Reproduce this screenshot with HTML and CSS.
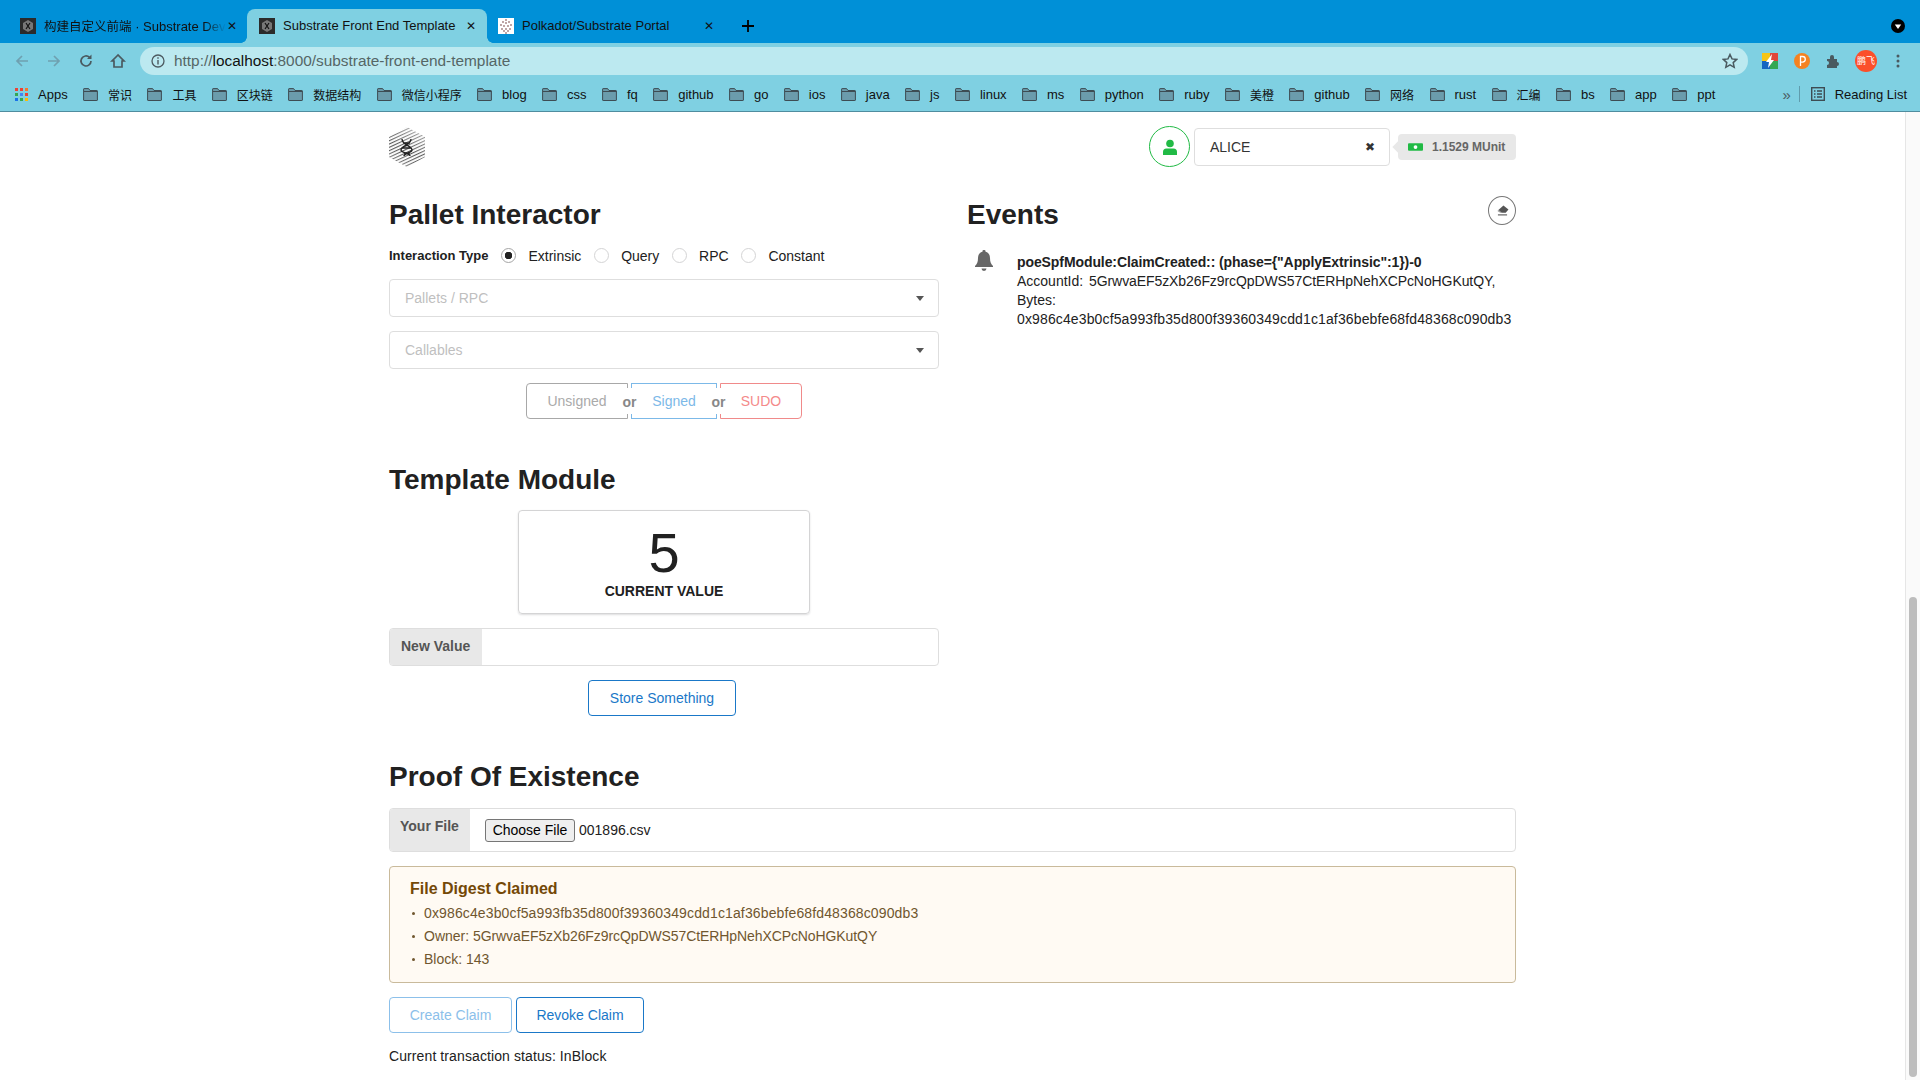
FILE: index.html
```html
<!DOCTYPE html>
<html lang="en">
	<head>
		<meta charset="UTF-8">
		<title>Substrate Front End Template</title>
		<link rel="stylesheet" href="styles.css">
	</head>
	<body>
		<svg class="defs" width="0" height="0">
			<defs>
				<symbol id="folder" viewBox="0 0 15 13">
					<path d="M.6 2V12a.5.5 0 0 0 .5.5H13.900a.5.5 0 0 0 .5-.5V3a.5.5 0 0 0-.5-.5H7L5.600.6H1.100a.5.5 0 0 0-.5.5z" fill="#6b9cac" stroke="#3d4c53" stroke-width="1"/>
					<path d="M1 3.500H14" stroke="#3d4c53" stroke-width="1"/>
				</symbol>
				<pattern id="hatch" width="3" height="3" patternUnits="userSpaceOnUse" patternTransform="rotate(-25)">
					<rect width="3" height="1.100" fill="#4a4a4a"/>
				</pattern>
				<linearGradient id="hexfade" x1="0.7" y1="0" x2="0.3" y2="1">
					<stop offset="0" stop-color="#fff" stop-opacity=".55"/>
					<stop offset=".6" stop-color="#fff" stop-opacity=".05"/>
					<stop offset="1" stop-color="#fff" stop-opacity=".35"/>
				</linearGradient>
				<symbol id="hexlogo" viewBox="0 0 36 40">
					<path d="M18 0L36 10V30L18 40L0 30V10z" fill="url(#hatch)"/>
					<path d="M18 0L36 10V30L18 40L0 30V10z" fill="url(#hexfade)"/>
					<path d="M13 12C13 18 23 19 23 23C23 26 15 26 15 29M22 12C22 18 12 19 12 23C12 26 21 26 21 29M14 16H21M13 21H22M15 26H21" fill="none" stroke="#222" stroke-width="1.400"/>
				</symbol>
			</defs>
		</svg>

		<header class="browser">
			<div class="tabstrip">
				<div class="tab tab-first">
					<svg class="favicon" viewBox="0 0 16 16"><rect width="16" height="16" fill="#2b2b2b"/><path d="M8 2l5 3v6l-5 3-5-3V5z" fill="#777"/><path d="M6 5l4 6M10 5l-4 6" stroke="#111" stroke-width="1.200"/></svg>
					<span class="tab-title fade"><span class="tab-cjk">构建自定义前端</span> · Substrate Dev</span>
					<span class="tab-close">✕</span>
				</div>
				<div class="tab active">
					<svg class="favicon" viewBox="0 0 16 16"><rect width="16" height="16" fill="#2b2b2b"/><path d="M8 2l5 3v6l-5 3-5-3V5z" fill="#777"/><path d="M6 5l4 6M10 5l-4 6" stroke="#111" stroke-width="1.200"/></svg>
					<span class="tab-title">Substrate Front End Template</span>
					<span class="tab-close">✕</span>
				</div>
				<div class="tab tab-last">
					<svg class="favicon" viewBox="0 0 16 16"><rect width="16" height="16" fill="#fff"/><g fill="#a88"><circle cx="8" cy="2" r="1"/><circle cx="5" cy="4" r="1"/><circle cx="11" cy="4" r="1"/><circle cx="8" cy="5" r="1"/><circle cx="3" cy="7" r="1"/><circle cx="6" cy="8" r="1"/><circle cx="10" cy="8" r="1"/><circle cx="13" cy="7" r="1"/><circle cx="4" cy="11" r="1"/><circle cx="8" cy="11" r="1"/><circle cx="12" cy="11" r="1"/><circle cx="6" cy="13" r="1"/><circle cx="10" cy="13" r="1"/><circle cx="8" cy="15" r="1"/></g></svg>
					<span class="tab-title">Polkadot/Substrate Portal</span>
					<span class="tab-close">✕</span>
				</div>
				<svg class="new-tab" viewBox="0 0 14 14"><path d="M7 1V13M1 7H13" stroke="#000" stroke-width="1.800"/></svg>
				<svg class="tab-search" viewBox="0 0 14 14"><circle cx="7" cy="7" r="7" fill="#000"/><path d="M3.800 5.500H10.200L7 10z" fill="#fff"/></svg>
			</div>
			<div class="toolbar">
				<svg class="nav-btn" viewBox="0 0 16 16"><path d="M14 8H3M8 3L3 8l5 5" fill="none" stroke="#6fa0b0" stroke-width="1.700"/></svg>
				<svg class="nav-btn" viewBox="0 0 16 16"><path d="M2 8H13M8 3l5 5-5 5" fill="none" stroke="#6fa0b0" stroke-width="1.700"/></svg>
				<svg class="nav-btn" viewBox="0 0 16 16"><path d="M13 8A5 5 0 1 1 11.500 4.400" fill="none" stroke="#4a5a60" stroke-width="1.700"/><path d="M13.500 1.500V6H9z" fill="#4a5a60"/></svg>
				<svg class="nav-btn" viewBox="0 0 16 16"><path d="M8 2L2 8H4V14H12V8H14z" fill="none" stroke="#4a5a60" stroke-width="1.700"/></svg>
				<div class="omnibox">
					<svg class="info" viewBox="0 0 14 14"><circle cx="7" cy="7" r="6" fill="none" stroke="#4d5a60" stroke-width="1.300"/><path d="M7 6V10.500M7 3.300V4.800" stroke="#4d5a60" stroke-width="1.400"/></svg>
					<span class="url">http://<b>localhost</b>:8000/substrate-front-end-template</span>
					<svg class="star" viewBox="0 0 16 16"><path d="M8 1.500l2 4.400 4.700.5-3.500 3.200 1 4.700L8 11.900l-4.200 2.400 1-4.700L1.300 6.400 6 5.900z" fill="none" stroke="#4a5a60" stroke-width="1.500"/></svg>
				</div>
				<div class="extensions">
					<svg class="ext" viewBox="0 0 16 16"><rect width="8" height="8" fill="#f5c518"/><rect x="8" width="8" height="8" fill="#e0443a"/><rect y="8" width="8" height="8" fill="#1565c0"/><rect x="8" y="8" width="8" height="8" fill="#34a853"/><path d="M10 1L4 9h3l-1 6 6-8H9z" fill="#fff"/></svg>
					<svg class="ext" viewBox="0 0 16 16"><circle cx="8" cy="8" r="8" fill="#f58220"/><path d="M6.500 13V3.500h2a2.800 2.800 0 0 1 0 5.600h-2" fill="none" stroke="#fff" stroke-width="1.300"/></svg>
					<svg class="ext" viewBox="0 0 16 16"><path d="M1 6h3V4a2 2 0 0 1 4 0v2h3v3a2 2 0 0 1 0 4v2H1v-3a2 2 0 0 0 0-4z" fill="#4a5a60"/></svg>
					<span class="avatar">鹏飞</span>
					<svg class="ext" viewBox="0 0 16 16"><g fill="#4a5a60"><circle cx="8" cy="3" r="1.500"/><circle cx="8" cy="8" r="1.500"/><circle cx="8" cy="13" r="1.500"/></g></svg>
				</div>
			</div>
			<div class="bookmarks">
				<div class="bm apps">
					<svg class="apps-grid" viewBox="0 0 13 13"><g><rect width="3" height="3" fill="#ea4335"/><rect x="5" width="3" height="3" fill="#ea4335"/><rect x="10" width="3" height="3" fill="#f4772e"/><rect y="5" width="3" height="3" fill="#34a853"/><rect x="5" y="5" width="3" height="3" fill="#4285f4"/><rect x="10" y="5" width="3" height="3" fill="#ea4335"/><rect y="10" width="3" height="3" fill="#1a73e8"/><rect x="5" y="10" width="3" height="3" fill="#34a853"/><rect x="10" y="10" width="3" height="3" fill="#fbbc05"/></g></svg>
					<span>Apps</span>
				</div>
				<div class="bm"><svg class="folder"><use href="#folder"/></svg><span class="cjk">常识</span></div>
				<div class="bm"><svg class="folder"><use href="#folder"/></svg><span class="cjk">工具</span></div>
				<div class="bm"><svg class="folder"><use href="#folder"/></svg><span class="cjk">区块链</span></div>
				<div class="bm"><svg class="folder"><use href="#folder"/></svg><span class="cjk">数据结构</span></div>
				<div class="bm"><svg class="folder"><use href="#folder"/></svg><span class="cjk">微信小程序</span></div>
				<div class="bm"><svg class="folder"><use href="#folder"/></svg><span>blog</span></div>
				<div class="bm"><svg class="folder"><use href="#folder"/></svg><span>css</span></div>
				<div class="bm"><svg class="folder"><use href="#folder"/></svg><span>fq</span></div>
				<div class="bm"><svg class="folder"><use href="#folder"/></svg><span>github</span></div>
				<div class="bm"><svg class="folder"><use href="#folder"/></svg><span>go</span></div>
				<div class="bm"><svg class="folder"><use href="#folder"/></svg><span>ios</span></div>
				<div class="bm"><svg class="folder"><use href="#folder"/></svg><span>java</span></div>
				<div class="bm"><svg class="folder"><use href="#folder"/></svg><span>js</span></div>
				<div class="bm"><svg class="folder"><use href="#folder"/></svg><span>linux</span></div>
				<div class="bm"><svg class="folder"><use href="#folder"/></svg><span>ms</span></div>
				<div class="bm"><svg class="folder"><use href="#folder"/></svg><span>python</span></div>
				<div class="bm"><svg class="folder"><use href="#folder"/></svg><span>ruby</span></div>
				<div class="bm"><svg class="folder"><use href="#folder"/></svg><span class="cjk">美橙</span></div>
				<div class="bm"><svg class="folder"><use href="#folder"/></svg><span>github</span></div>
				<div class="bm"><svg class="folder"><use href="#folder"/></svg><span class="cjk">网络</span></div>
				<div class="bm"><svg class="folder"><use href="#folder"/></svg><span>rust</span></div>
				<div class="bm"><svg class="folder"><use href="#folder"/></svg><span class="cjk">汇编</span></div>
				<div class="bm"><svg class="folder"><use href="#folder"/></svg><span>bs</span></div>
				<div class="bm"><svg class="folder"><use href="#folder"/></svg><span>app</span></div>
				<div class="bm"><svg class="folder"><use href="#folder"/></svg><span>ppt</span></div>
				<div class="bm-end">
					<span class="more">»</span>
					<span class="bm-sep"></span>
					<svg class="reading" viewBox="0 0 14 14"><rect x=".7" y=".7" width="12.600" height="12.600" fill="none" stroke="#3d4c53" stroke-width="1.400"/><path d="M3 4H4.500M6 4H11M3 7H4.500M6 7H11M3 10H4.500M6 10H11" stroke="#3d4c53" stroke-width="1.300"/></svg>
					<span>Reading List</span>
				</div>
			</div>
		</header>

		<div class="viewport">
			<main class="page">
				<div class="topbar">
					<svg class="logo"><use href="#hexlogo"/></svg>
					<div class="account">
						<span class="user-btn">
							<svg viewBox="0 0 16 16" width="16" height="16"><circle cx="8" cy="4.500" r="3.800" fill="#21ba45"/><path d="M1 16V13a3.500 3.500 0 0 1 3.500-3.500h7A3.500 3.500 0 0 1 15 13v3z" fill="#21ba45"/></svg>
						</span>
						<div class="account-select">
							<span>ALICE</span>
							<span class="clear">✖</span>
						</div>
						<div class="balance">
							<svg viewBox="0 0 16 8" width="15" height="8"><rect width="16" height="8" rx="1" fill="#21ba45"/><circle cx="8" cy="4" r="2" fill="#fff"/></svg>
							<span>1.1529 MUnit</span>
						</div>
					</div>
				</div>

				<div class="cols">
					<div class="col">
						<h1>Pallet Interactor</h1>
						<div class="interaction">
							<label class="interaction-label">Interaction Type</label>
							<span class="radio checked"></span><span class="radio-text">Extrinsic</span>
							<span class="radio"></span><span class="radio-text">Query</span>
							<span class="radio"></span><span class="radio-text">RPC</span>
							<span class="radio"></span><span class="radio-text">Constant</span>
						</div>
						<div class="select">Pallets / RPC</div>
						<div class="select">Callables</div>
						<div class="tx-buttons">
							<span class="btn tx-unsigned">Unsigned</span>
							<span class="or"><b>or</b></span>
							<span class="btn tx-signed">Signed</span>
							<span class="or"><b>or</b></span>
							<span class="btn tx-sudo">SUDO</span>
						</div>

						<h1 class="mid-title">Template Module</h1>
						<div class="value-card">
							<div class="value-num">5</div>
							<div class="value-label">CURRENT VALUE</div>
						</div>
						<div class="labeled-input">
							<span class="input-label">New Value</span>
							<span class="input-body"></span>
						</div>
						<div class="store-row">
							<span class="btn primary store">Store Something</span>
						</div>
					</div>

					<div class="col">
						<div class="events-head">
							<h1>Events</h1>
							<span class="erase">
								<svg viewBox="0 0 14 12" width="13" height="11"><path d="M8 0.500L13.500 5 10.500 8.500H6L2.500 5.500z" fill="#555"/><path d="M2.500 5.500L6 8.500H4.500L1.500 6.500z" fill="#999"/><path d="M2 10.800H12" stroke="#555" stroke-width="1.200"/></svg>
							</span>
						</div>
						<div class="event">
							<svg class="bell" viewBox="0 0 18 21"><path d="M9 0a1.500 1.500 0 0 1 1.500 1.800C13.500 2.500 15 5 15 8c0 4 1 6 3 8v1H0v-1c2-2 3-4 3-8 0-3 1.500-5.500 4.500-6.200A1.500 1.500 0 0 1 9 0zM6.500 18.500h5a2.500 2.500 0 0 1-5 0z" fill="#666"/></svg>
							<div class="event-text">
								<div class="event-name">poeSpfModule:ClaimCreated:: (phase={"ApplyExtrinsic":1})-0</div>
								<div>AccountId: <span class="addr event-addr">5GrwvaEF5zXb26Fz9rcQpDWS57CtERHpNehXCPcNoHGKutQY,</span></div>
								<div>Bytes:</div>
								<div class="hex">0x986c4e3b0cf5a993fb35d800f39360349cdd1c1af36bebfe68fd48368c090db3</div>
							</div>
						</div>
					</div>
				</div>

				<h1 class="mid-title">Proof Of Existence</h1>
				<div class="labeled-input file-input">
					<span class="input-label">Your File</span>
					<span class="input-body">
						<span class="choose">Choose File</span>
						<span>001896.csv</span>
					</span>
				</div>
				<div class="message">
					<div class="message-head">File Digest Claimed</div>
					<ul>
						<li class="hex">0x986c4e3b0cf5a993fb35d800f39360349cdd1c1af36bebfe68fd48368c090db3</li>
						<li>Owner: <span class="addr">5GrwvaEF5zXb26Fz9rcQpDWS57CtERHpNehXCPcNoHGKutQY</span></li>
						<li>Block: 143</li>
					</ul>
				</div>
				<div class="claim-row">
					<span class="btn primary disabled create">Create Claim</span>
					<span class="btn primary revoke">Revoke Claim</span>
				</div>
				<div class="status">Current transaction status: InBlock</div>
			</main>
			<div class="scrollbar"><div class="thumb"></div></div>
		</div>
	</body>
</html>
```
FILE: styles.css
```css
* {
	margin: 0;
	padding: 0;
	box-sizing: border-box;
}

html, body {
	height: 1080px;
	overflow: hidden;
}

body {
	font-family: "Liberation Sans", "Noto Sans CJK SC", sans-serif;
	font-size: 14px;
	color: #212121;
	background-color: #fff;
	display: flex;
	flex-direction: column;
}

.defs {
	position: absolute;
}

/* browser chrome */
.browser {
	height: 112px;
	flex: none;
	background-color: #7fd0e2;
	border-bottom: 1px solid #4f8d9f;
	color: #111;
}

.tabstrip {
	height: 43px;
	background-color: #0090d7;
	display: flex;
	align-items: flex-end;
}

.tab {
	height: 34px;
	display: flex;
	align-items: center;
	font-size: 13px;
	flex: none;
}

.tab-first {
	width: 247px;
	padding: 0 9px 0 20px;
}

.tab.active {
	width: 240px;
	padding: 0 10px 0 12px;
	background-color: #7fd0e2;
	border-radius: 8px 8px 0 0;
	position: relative;
}

.tab.active::before,
.tab.active::after {
	content: "";
	position: absolute;
	bottom: 0;
	width: 6px;
	height: 6px;
}

.tab.active::before {
	left: -6px;
	background: radial-gradient(circle at 0 0, #0090d7 5.500px, #7fd0e2 6px);
}

.tab.active::after {
	right: -6px;
	background: radial-gradient(circle at 100% 0, #0090d7 5.500px, #7fd0e2 6px);
}

.tab-last {
	width: 233px;
	padding: 0 5px 0 11px;
}

.favicon {
	width: 16px;
	height: 16px;
	margin-right: 8px;
	flex: none;
}

.tab-title {
	flex: 1;
	white-space: nowrap;
	overflow: hidden;
	padding-bottom: 2px;
}

.tab-cjk {
	font-size: 12.500px;
}

.fade {
	mask-image: linear-gradient(to right, #000 88%, transparent 100%);
}

.tab-close {
	font-size: 12px;
	width: 12px;
	text-align: center;
	flex: none;
}

.new-tab {
	width: 14px;
	height: 14px;
	margin: 0 0 10px 21px;
}

.tab-search {
	width: 14px;
	height: 14px;
	margin: 0 15px 10px auto;
}

.toolbar {
	height: 36px;
	display: flex;
	align-items: center;
	padding: 4px 14px;
}

.nav-btn {
	width: 16px;
	height: 16px;
	margin-right: 16px;
	flex: none;
}

.omnibox {
	width: 1608px;
	height: 28px;
	margin-left: -2px;
	flex: none;
	background-color: #bce9f0;
	border-radius: 14px;
	display: flex;
	align-items: center;
	padding: 0 11px;
	color: #566;
}

.info {
	width: 14px;
	height: 14px;
	margin-right: 9px;
}

.url {
	font-size: 15.400px;
}

.url b {
	font-weight: normal;
	color: #111;
}

.star {
	width: 16px;
	height: 16px;
	margin-left: auto;
	margin-right: -1px;
}

.extensions {
	display: flex;
	align-items: center;
	margin-left: 14px;
}

.ext {
	width: 16px;
	height: 16px;
	margin-right: 16px;
	flex: none;
}

.ext:last-child {
	margin-right: 0;
}

.avatar {
	width: 22px;
	height: 22px;
	margin: 0 13px 0 -3px;
	border-radius: 50%;
	background-color: #fb4f2a;
	color: #fff;
	font-size: 9px;
	line-height: 22px;
	text-align: center;
	white-space: nowrap;
	flex: none;
}

.bookmarks {
	height: 32px;
	display: flex;
	align-items: center;
	gap: 15.400px;
	padding: 0 0 2px 15px;
	font-size: 13px;
	white-space: nowrap;
}

.bm {
	display: flex;
	align-items: center;
}

.apps-grid {
	width: 13px;
	height: 13px;
	margin-right: 10px;
}

.folder {
	width: 15px;
	height: 13px;
	margin-right: 10px;
}

.cjk {
	font-size: 12px;
}

.bm-end {
	margin-left: auto;
	display: flex;
	align-items: center;
	padding-right: 13px;
}

.more {
	color: #4a5a60;
	font-size: 15px;
}

.bm-sep {
	width: 1px;
	height: 16px;
	margin: 0 11px 0 8px;
	background-color: #5f9cad;
}

.reading {
	width: 14px;
	height: 14px;
	margin-right: 10px;
}

/* page */
.viewport {
	flex: 1;
	display: flex;
	min-height: 0;
}

.page {
	flex: 1;
	padding: 14px 389px 0;
	min-width: 0;
}

.scrollbar {
	width: 15px;
	flex: none;
	background-color: #fafafa;
	border-left: 1px solid #e6e6e6;
	padding: 485px 3px 0 3px;
}

.thumb {
	height: 480px;
	background-color: #bdbdbd;
	border-radius: 4px;
}

.topbar {
	height: 41px;
	display: flex;
	align-items: center;
	justify-content: space-between;
}

.logo {
	width: 36px;
	height: 40px;
}

.account {
	display: flex;
	align-items: center;
}

.user-btn {
	width: 41px;
	height: 41px;
	border: 1px solid #21ba45;
	border-radius: 50%;
	display: flex;
	align-items: center;
	justify-content: center;
}

.account-select {
	width: 196px;
	height: 38px;
	margin-left: 4px;
	border: 1px solid #dedede;
	border-radius: 4px;
	display: flex;
	align-items: center;
	justify-content: space-between;
	padding: 0 14px 0 15px;
	color: #333;
}

.clear {
	font-size: 12px;
}

.balance {
	width: 118px;
	height: 26px;
	margin-left: 8px;
	background-color: #e8e8e8;
	border-radius: 4px;
	display: flex;
	align-items: center;
	gap: 9px;
	padding-left: 10px;
	font-size: 12px;
	font-weight: bold;
	color: #666;
	position: relative;
}

.balance::before {
	content: "";
	position: absolute;
	left: -4px;
	top: 9px;
	width: 8px;
	height: 8px;
	background-color: #e8e8e8;
	transform: rotate(45deg);
}

.cols {
	display: grid;
	grid-template-columns: 550px 549px;
	gap: 28px;
	margin-top: 29px;
}

h1 {
	font-size: 28px;
	line-height: 36px;
	font-weight: bold;
	padding-top: 1px;
	margin-bottom: -1px;
}

.interaction {
	display: flex;
	align-items: center;
	margin-top: 16px;
	height: 15px;
}

.interaction-label {
	font-size: 13px;
	font-weight: bold;
	margin-right: 13px;
}

.radio {
	width: 15px;
	height: 15px;
	border: 1px solid #d4d4d5;
	border-radius: 50%;
	margin-right: 12px;
	flex: none;
}

.radio.checked {
	border-color: #a5a5a5;
	background: radial-gradient(circle, #222 0, #222 3.500px, #fff 4px);
}

.radio-text {
	margin-right: 12.800px;
}

.select {
	height: 38px;
	margin-top: 16px;
	border: 1px solid #dedede;
	border-radius: 4px;
	padding: 0 15px;
	line-height: 36px;
	color: #bfbfbf;
	position: relative;
}

.select + .select {
	margin-top: 14px;
}

.select::after {
	content: "";
	position: absolute;
	right: 14px;
	top: 16px;
	border-left: 4px solid transparent;
	border-right: 4px solid transparent;
	border-top: 5px solid #555;
}

.btn {
	display: inline-flex;
	align-items: center;
	justify-content: center;
	height: 36px;
	border: 1px solid #999;
	border-radius: 4px;
}

.tx-buttons {
	display: flex;
	justify-content: center;
	margin-top: 14px;
}

.tx-unsigned {
	width: 102px;
	color: #aaa;
	border-color: #a8a8a8;
	border-radius: 4px 0 0 4px;
}

.tx-signed {
	width: 86px;
	color: #7cb9e8;
	border-color: #7cb9e8;
	border-radius: 0;
}

.tx-sudo {
	width: 82px;
	color: #f48a8a;
	border-color: #f08a8a;
	border-radius: 0 4px 4px 0;
}

.or {
	width: 3px;
	position: relative;
}

.or b {
	position: absolute;
	left: -10px;
	top: 5px;
	width: 23px;
	height: 26px;
	line-height: 28px;
	text-align: center;
	background-color: #fff;
	color: #888;
	font-size: 14px;
}

.mid-title {
	margin-top: 42px;
}

.value-card {
	width: 292px;
	height: 104px;
	margin: 13px auto 0;
	border: 1px solid #d4d4d5;
	border-radius: 4px;
	box-shadow: 0 1px 2px rgba(34, 36, 38, 0.15);
	text-align: center;
}

.value-num {
	font-size: 56px;
	line-height: 56px;
	margin-top: 14px;
}

.value-label {
	font-weight: bold;
	line-height: 18px;
	margin-top: 1px;
}

.labeled-input {
	height: 38px;
	margin-top: 14px;
	display: flex;
	border: 1px solid #dedede;
	border-radius: 4px;
	overflow: hidden;
}

.input-label {
	width: 92px;
	padding-left: 11px;
	background-color: #e8e8e8;
	color: #555;
	font-weight: bold;
	line-height: 34px;
	flex: none;
}

.input-body {
	flex: 1;
	display: flex;
	align-items: center;
}

.store-row {
	display: flex;
	justify-content: center;
	margin-top: 14px;
	padding-right: 4px;
}

.primary {
	border-color: #1a78c8;
	color: #1a78c8;
}

.store {
	width: 148px;
}

.events-head {
	display: flex;
	justify-content: space-between;
}

.erase {
	width: 28px;
	height: 29px;
	border: 1px solid #777;
	border-radius: 50%;
	display: flex;
	align-items: center;
	justify-content: center;
}

.event {
	display: flex;
	margin-top: 18px;
	padding-left: 8px;
}

.bell {
	width: 18px;
	height: 21px;
	flex: none;
}

.event-text {
	margin-left: 24px;
	padding-top: 3px;
	line-height: 19px;
}

.event-name {
	font-weight: bold;
	letter-spacing: -0.090px;
}

.addr {
	letter-spacing: -0.090px;
}

.event-addr {
	margin-left: 2px;
}

.hex {
	letter-spacing: 0.130px;
}

.file-input {
	height: 44px;
}

.file-input .input-label {
	width: 80px;
	padding-left: 10px;
	line-height: 35px;
}

.file-input .input-body {
	padding: 0 0 0 15px;
	gap: 4px;
}

.choose {
	width: 90px;
	height: 23px;
	border: 1px solid #767676;
	border-radius: 3px;
	background-color: #efefef;
	color: #000;
	text-align: center;
	line-height: 21px;
}

.message {
	height: 117px;
	margin-top: 14px;
	border: 1px solid #c9ba9b;
	border-radius: 4px;
	background-color: #fffaf3;
	padding: 12px 20px 0;
	color: #70562e;
}

.message-head {
	font-size: 16px;
	font-weight: bold;
	line-height: 20px;
	color: #744806;
}

.message ul {
	list-style: none;
	margin-top: 3px;
}

.message li {
	line-height: 23px;
	padding-left: 14px;
	position: relative;
}

.message li::before {
	content: "";
	position: absolute;
	left: 2px;
	top: 10px;
	width: 3px;
	height: 3px;
	border-radius: 50%;
	background-color: #70562e;
}

.claim-row {
	display: flex;
	gap: 4px;
	margin-top: 14px;
}

.create {
	width: 123px;
}

.disabled {
	color: #8cc0ea;
	border-color: #8cc0ea;
}

.revoke {
	width: 128px;
}

.status {
	margin-top: 14px;
	line-height: 18px;
	letter-spacing: 0.100px;
}
```
